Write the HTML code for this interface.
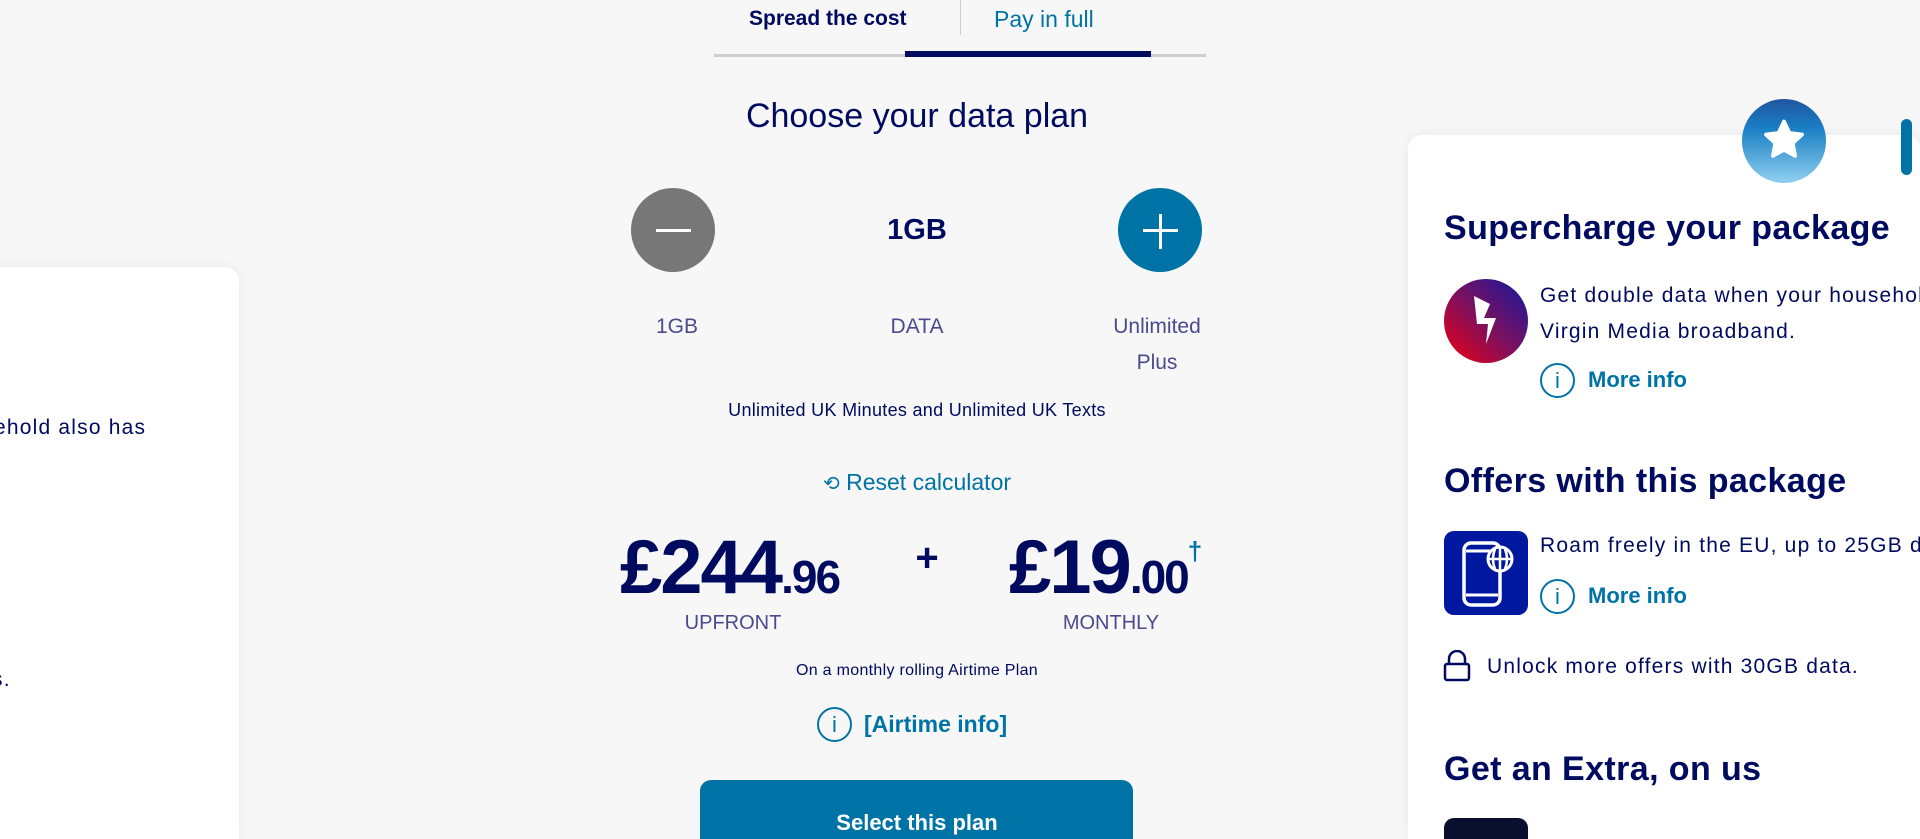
<!DOCTYPE html>
<html style="height:839px;overflow:hidden"><head><meta charset="utf-8"><style>
*{margin:0;padding:0;box-sizing:border-box}
html,body{width:1920px;height:839px;overflow:hidden}
body{background:#f7f7f7;position:relative;font-family:"Liberation Sans",sans-serif;color:#000a5e}
.a{position:absolute;white-space:nowrap}
.c{transform:translateX(-50%)}
.lab{color:#4b4a8c;font-size:21px}
.teal{color:#0073a6}
.card{position:absolute;background:#fff;border-radius:14px 14px 0 0;box-shadow:0 0 14px rgba(0,0,0,.06)}
.h{font-weight:bold;font-size:34px;letter-spacing:0.4px;color:#000a5e}
.t{font-size:21px;letter-spacing:1.2px;color:#000a5e}
.mi{font-weight:bold;font-size:22px;color:#0073a6}
</style></head><body>
<div class="a" style="left:749px;top:7px;font-size:21px;font-weight:bold;color:#000a5e">Spread the cost</div>
<div class="a" style="left:960px;top:0;width:1px;height:35px;background:#ccc"></div>
<div class="a" style="left:994px;top:6px;font-size:23px;color:#0073a6">Pay in full</div>
<div class="a" style="left:714px;top:54px;width:492px;height:3px;background:#cfcfcf"></div>
<div class="a" style="left:905px;top:51px;width:246px;height:6px;background:#000a5e"></div>

<div class="a c" style="left:917px;top:97px;font-size:34px;color:#000a5e">Choose your data plan</div>

<div class="a" style="left:631px;top:188px;width:84px;height:84px;border-radius:50%;background:#777"></div>
<div class="a" style="left:656px;top:229px;width:35px;height:3px;background:#fff"></div>
<div class="a c" style="left:917px;top:214px;font-size:29px;font-weight:bold">1GB</div>
<div class="a" style="left:1118px;top:188px;width:84px;height:84px;border-radius:50%;background:#0073a6"></div>
<div class="a" style="left:1143px;top:229px;width:35px;height:3px;background:#fff"></div>
<div class="a" style="left:1159px;top:214px;width:3px;height:35px;background:#fff"></div>

<div class="a c lab" style="left:677px;top:315px">1GB</div>
<div class="a c lab" style="left:917px;top:315px">DATA</div>
<div class="a c lab" style="left:1157px;top:315px">Unlimited</div>
<div class="a c lab" style="left:1157px;top:351px">Plus</div>

<div class="a c" style="left:917px;top:400px;font-size:18px;letter-spacing:0.3px">Unlimited UK Minutes and Unlimited UK Texts</div>

<div class="a c teal" style="left:917px;top:469px;font-size:23px"><span style="font-size:20px">&#x27F2;</span> Reset calculator</div>

<div class="a" style="left:620px;top:530px;font-weight:bold;font-size:76px;letter-spacing:-2px;line-height:1">£244<span style="font-size:46px">.96</span></div>
<div class="a c lab" style="left:733px;top:612px;font-size:20px">UPFRONT</div>
<div class="a c" style="left:927px;top:536px;font-weight:bold;font-size:40px">+</div>
<div class="a" style="left:1009px;top:530px;font-weight:bold;font-size:76px;letter-spacing:-2px;line-height:1">£19<span style="font-size:46px">.00</span><span style="font-size:26px;color:#0073a6;vertical-align:top;position:relative;top:8px">†</span></div>
<div class="a c lab" style="left:1111px;top:612px;font-size:20px">MONTHLY</div>

<div class="a c" style="left:917px;top:662px;font-size:16px;letter-spacing:0.3px">On a monthly rolling Airtime Plan</div>

<div class="a" style="left:817px;top:707px;width:35px;height:35px;border:2px solid #0073a6;border-radius:50%;color:#0073a6;font-size:22px;text-align:center;line-height:31px">i</div>
<div class="a mi" style="left:864px;top:711px;font-size:23px">[Airtime info]</div>

<div class="a" style="left:700px;top:780px;width:433px;height:59px;border-radius:11px 11px 0 0;background:#0073a6"></div>
<div class="a c" style="left:917px;top:810px;color:#fff;font-weight:bold;font-size:22px">Select this plan</div>

<div class="card" style="left:-30px;top:267px;width:269px;height:572px"></div>
<div class="a t" style="left:-6px;top:416px">ehold also has</div>
<div class="a t" style="left:-8px;top:668px">s.</div>

<div class="card" style="left:1408px;top:135px;width:512px;height:704px"></div>
<div class="a" style="left:1742px;top:99px;width:84px;height:84px;border-radius:50%;background:linear-gradient(#1f56a0,#1a7fc4 35%,#90d0f0)"></div>
<svg class="a" style="left:1758px;top:114px" width="52" height="52" viewBox="0 0 24 24"><path d="M12 3.5l2.5 5.3 5.8.7-4.3 4 1.1 5.8L12 16.5 6.9 19.3 8 13.5 3.7 9.5l5.8-.7z" fill="#fff" stroke="#fff" stroke-width="1.8" stroke-linejoin="round"/></svg>
<div class="a" style="left:1901px;top:119px;width:11px;height:56px;border-radius:6px;background:#0073a6"></div>

<div class="a h" style="left:1444px;top:209px">Supercharge your package</div>
<div class="a" style="left:1444px;top:279px;width:84px;height:84px;border-radius:50%;background:linear-gradient(225deg,#1018a0,#7a1060 50%,#f00010)"></div>
<svg class="a" style="left:1465px;top:292px" width="40" height="60" viewBox="0 0 40 60"><path d="M9 4l16 8-6 14 12 0-10 26 2-20-11 0z" fill="#fff"/></svg>
<div class="a t" style="left:1540px;top:284px">Get double data when your household also has</div>
<div class="a t" style="left:1540px;top:320px">Virgin Media broadband.</div>
<div class="a" style="left:1540px;top:363px;width:35px;height:35px;border:2px solid #0073a6;border-radius:50%;color:#0073a6;font-size:22px;text-align:center;line-height:31px">i</div>
<div class="a mi" style="left:1588px;top:367px">More info</div>

<div class="a h" style="left:1444px;top:462px">Offers with this package</div>
<div class="a" style="left:1444px;top:531px;width:84px;height:84px;border-radius:10px;background:#0017a0"></div>
<svg class="a" style="left:1444px;top:531px" width="84" height="84" viewBox="0 0 84 84"><rect x="20" y="12" width="36" height="62" rx="7" fill="none" stroke="#fff" stroke-width="3.5"/><line x1="22" y1="20" x2="54" y2="20" stroke="#fff" stroke-width="3"/><line x1="22" y1="64" x2="54" y2="64" stroke="#fff" stroke-width="3"/><circle cx="56" cy="28" r="12" fill="#0017a0" stroke="#fff" stroke-width="3"/><path d="M44 28h24M56 16v24M51 18q-4 10 0 20M61 18q4 10 0 20" stroke="#fff" stroke-width="2.5" fill="none"/></svg>
<div class="a t" style="left:1540px;top:534px">Roam freely in the EU, up to 25GB data</div>
<div class="a" style="left:1540px;top:579px;width:35px;height:35px;border:2px solid #0073a6;border-radius:50%;color:#0073a6;font-size:22px;text-align:center;line-height:31px">i</div>
<div class="a mi" style="left:1588px;top:583px">More info</div>

<svg class="a" style="left:1443px;top:650px" width="28" height="32" viewBox="0 0 28 32"><path d="M6 14V9a8 8 0 0 1 16 0v5" fill="none" stroke="#000a5e" stroke-width="2.5"/><rect x="2" y="14" width="24" height="16" rx="2" fill="none" stroke="#000a5e" stroke-width="2.5"/></svg>
<div class="a t" style="left:1487px;top:655px">Unlock more offers with 30GB data.</div>

<div class="a h" style="left:1444px;top:750px">Get an Extra, on us</div>
<div class="a" style="left:1444px;top:818px;width:84px;height:21px;border-radius:10px 10px 0 0;background:#0a0f2e"></div>
</body></html>
